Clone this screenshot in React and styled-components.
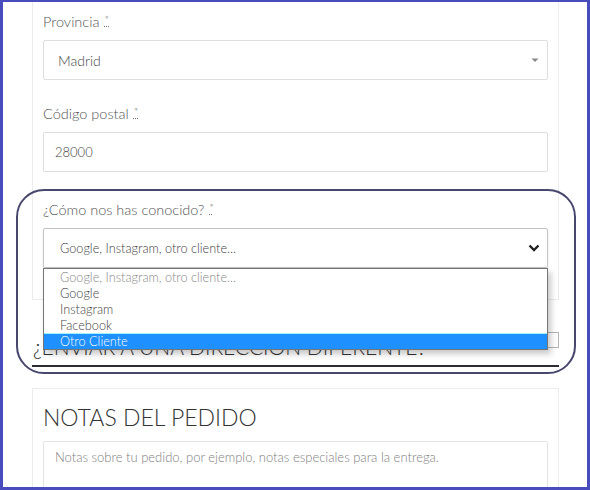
import React from 'react';
import styled, { createGlobalStyle } from 'styled-components';

const GlobalStyle = createGlobalStyle`
  html, body {
    margin: 0;
    padding: 0;
    background: #fff;
  }
  body {
    font-family: Lato, "Noto Sans", sans-serif;
  }
`;

const Frame = styled.div`
  position: relative;
  width: 590px;
  height: 490px;
  box-sizing: border-box;
  border: 3px solid #484cbd;
  border-top-width: 2px;
  overflow: hidden;
  background: #fff;
`;

const Column = styled.div`
  width: 527px;
  margin-left: 29px;
`;

const Card = styled.div`
  box-sizing: border-box;
  border: 1px solid #ececec;
  border-top: ${props => (props.$open ? 'none' : '1px solid #ececec')};
  padding: ${props => props.$pad};
`;

const Field = styled.div`
  position: relative;
  margin-bottom: ${props => props.$gap || 0}px;
`;

const Label = styled.label`
  display: block;
  height: 20px;
  font-size: 14.5px;
  line-height: 20px;
  font-weight: 300;
  color: #555;
  margin-bottom: 8px;
`;

const Required = styled.abbr`
  position: relative;
  top: -3px;
  margin-left: 5px;
  font-size: 11px;
  line-height: 0;
  color: #777;
  text-decoration: underline dotted;
  text-underline-offset: 2px;
`;

const SelectBox = styled.div`
  box-sizing: border-box;
  height: 40px;
  display: flex;
  align-items: center;
  justify-content: space-between;
  border: 1px solid ${props => (props.$active ? '#c4c4c4' : '#dedede')};
  border-radius: 2px;
  padding: 0 6px 0 ${props => props.$indent}px;
  font-size: ${props => props.$size}px;
  font-weight: 300;
  color: #444;
  background: #fff;
  box-shadow: ${props => (props.$active ? '0 1px 3px rgba(0,0,0,0.08)' : 'none')};
`;

const TextInput = styled.input`
  box-sizing: border-box;
  width: 100%;
  height: 40px;
  border: 1px solid #dedede;
  border-radius: 2px;
  padding: 0 11px;
  font-family: inherit;
  font-size: 13px;
  font-weight: 300;
  color: #444;
  outline: none;
`;

const OptionList = styled.ul`
  position: absolute;
  left: 0;
  right: 0;
  top: 100%;
  z-index: 2;
  margin: 0;
  padding: 0;
  list-style: none;
  background: #fff;
  border: 1px solid #767676;
  box-shadow: 3px 4px 6px rgba(0, 0, 0, 0.22);
`;

const Option = styled.li`
  height: 16px;
  line-height: 16px;
  padding-left: 16px;
  font-size: 12.7px;
  font-weight: 300;
  color: ${props => (props.$selected ? '#fff' : props.$muted ? '#888' : '#444')};
  background: ${props => (props.$selected ? '#1e90ff' : 'transparent')};
  box-shadow: ${props => (props.$selected ? 'inset 0 1px 0 #9ef3ff' : 'none')};
`;

const ShipRow = styled.div`
  display: flex;
  justify-content: space-between;
  align-items: flex-start;
  padding: 32px 0 6px;
  border-bottom: 2px solid #2c2c34;
`;

const SectionTitle = styled.h3`
  margin: ${props => props.$margin || 0};
  font-size: ${props => props.$size}px;
  line-height: ${props => props.$size + 4}px;
  font-weight: 300;
  color: #333;
  text-transform: uppercase;
`;

const Checkbox = styled.span`
  box-sizing: border-box;
  width: 16px;
  height: 16px;
  border: 1px solid #b5b5b5;
  background: #fff;
`;

const NotesArea = styled.textarea`
  display: block;
  box-sizing: border-box;
  width: 100%;
  height: 80px;
  border: 1px solid #e4e4e4;
  border-radius: 2px;
  padding: 7px 11px;
  font-family: inherit;
  font-size: 13px;
  font-weight: 300;
  line-height: 16px;
  color: #555;
  resize: none;
  outline: none;

  &::placeholder {
    color: #808080;
  }
`;

const Highlight = styled.div`
  position: absolute;
  left: 13px;
  top: 187px;
  width: 560px;
  height: 185px;
  box-sizing: border-box;
  border: 2px solid #48486e;
  border-radius: 28px;
  pointer-events: none;
  z-index: 3;
`;

const Caret = () => (
  <svg width="12" height="8" viewBox="0 0 12 8">
    <path d="M2.5 2.5h7L6 6z" fill="#888" />
  </svg>
);

const Chevron = () => (
  <svg width="14" height="10" viewBox="0 0 14 10">
    <path d="M2.5 2.5L7 7l4.5-4.5" fill="none" stroke="#222" strokeWidth="2.4" />
  </svg>
);

const options = [
  { label: 'Google, Instagram, otro cliente...', muted: true },
  { label: 'Google' },
  { label: 'Instagram' },
  { label: 'Facebook' },
  { label: 'Otro Cliente', selected: true },
];

const App = () => (
  <Frame>
    <GlobalStyle />
    <Column>
      <Card $open $pad="10px 10px 31px">
        <Field $gap={24}>
          <Label>
            Provincia<Required title="obligatorio">*</Required>
          </Label>
          <SelectBox $indent={14} $size={14}>
            Madrid
            <Caret />
          </SelectBox>
        </Field>
        <Field $gap={28}>
          <Label>
            Código postal<Required title="obligatorio">*</Required>
          </Label>
          <TextInput defaultValue="28000" />
        </Field>
        <Field>
          <Label>
            ¿Cómo nos has conocido?<Required title="obligatorio">*</Required>
          </Label>
          <Field>
            <SelectBox $indent={16} $size={12.7} $active>
              Google, Instagram, otro cliente...
              <Chevron />
            </SelectBox>
            <OptionList>
              {options.map(opt => (
                <Option key={opt.label} $muted={opt.muted} $selected={opt.selected}>
                  {opt.label}
                </Option>
              ))}
            </OptionList>
          </Field>
        </Field>
      </Card>

      <ShipRow>
        <SectionTitle $size={21} $margin="2px 0 0 1px">¿Enviar a una dirección diferente?</SectionTitle>
        <Checkbox />
      </ShipRow>

      <Card $pad="15px 10px 0" style={{ marginTop: 21 }}>
        <SectionTitle $size={23} $margin="0 0 10px">Notas del pedido</SectionTitle>
        <NotesArea placeholder="Notas sobre tu pedido, por ejemplo, notas especiales para la entrega." />
      </Card>
    </Column>
    <Highlight />
  </Frame>
);

export default App;
